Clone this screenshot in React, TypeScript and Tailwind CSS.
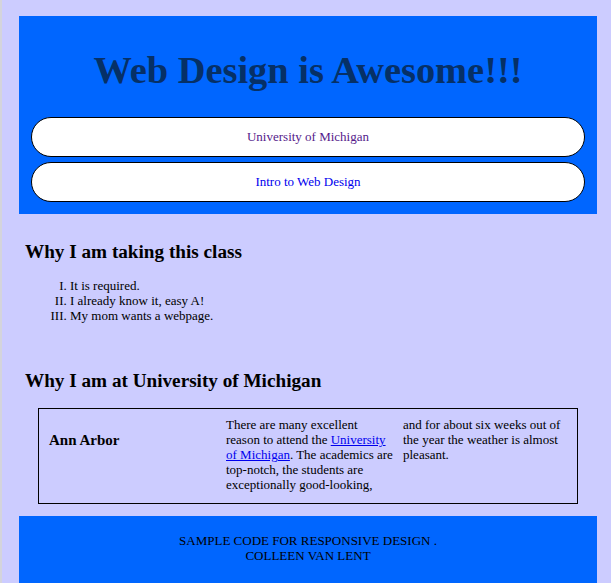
export default function App() {
  return (
    <div className="min-h-screen bg-[#ccccff] border-l-2 border-[#d4d4dc] pt-4 pb-0 font-['Liberation_Serif','Times_New_Roman',serif] text-[13px] leading-[15px] text-black">
      {/* Header */}
      <header className="ml-[17px] mr-[14px] bg-[#0066ff] pt-[32px] pb-[12px]">
        <h1 className="text-center text-[38.4px] leading-[44px] font-bold text-[#063066]">Web Design is Awesome!!!</h1>
        <nav className="mt-[25px] mx-3 flex flex-col gap-[5px]">
          <a href="#" className="h-10 pb-[2px] flex items-center justify-center rounded-full border border-black bg-white text-[#551a8b]">
            University of Michigan
          </a>
          <a href="#" className="h-10 pb-[2px] flex items-center justify-center rounded-full border border-black bg-white text-[#0000ee]">
            Intro to Web Design
          </a>
        </nav>
      </header>

      {/* Why taking the class */}
      <section className="ml-[23px] mt-[27px]">
        <h2 className="text-[19.2px] leading-[22px] font-bold">Why I am taking this class</h2>
        <ol className="mt-[15px] pl-[45px] list-[upper-roman]">
          <li>It is required.</li>
          <li>I already know it, easy A!</li>
          <li>My mom wants a webpage.</li>
        </ol>
      </section>

      {/* Why at UM */}
      <section className="ml-[23px] mr-[33px] mt-[47px]">
        <h2 className="text-[19.2px] leading-[22px] font-bold">Why I am at University of Michigan</h2>
        <div className="mt-[16px] ml-[13px] border border-black pt-2 pb-[11px] pl-[10px] grid grid-cols-[177px_177px_168px]">
          <div className="pt-[15px] text-[15px] leading-[17px] font-bold">Ann Arbor</div>
          <p className="pr-[9px]">
            There are many excellent reason to attend the{' '}
            <a href="#" className="text-[#0000ee] underline">University of Michigan</a>. The academics are
            top-notch, the students are exceptionally good-looking,
          </p>
          <p>and for about six weeks out of the year the weather is almost pleasant.</p>
        </div>
      </section>

      {/* Footer */}
      <footer className="ml-[17px] mr-[14px] mt-[12px] bg-[#0066ff] pt-[17px] pb-[40px] text-center">
        <p>SAMPLE CODE FOR RESPONSIVE DESIGN .</p>
        <p>COLLEEN VAN LENT</p>
      </footer>
    </div>
  );
}
